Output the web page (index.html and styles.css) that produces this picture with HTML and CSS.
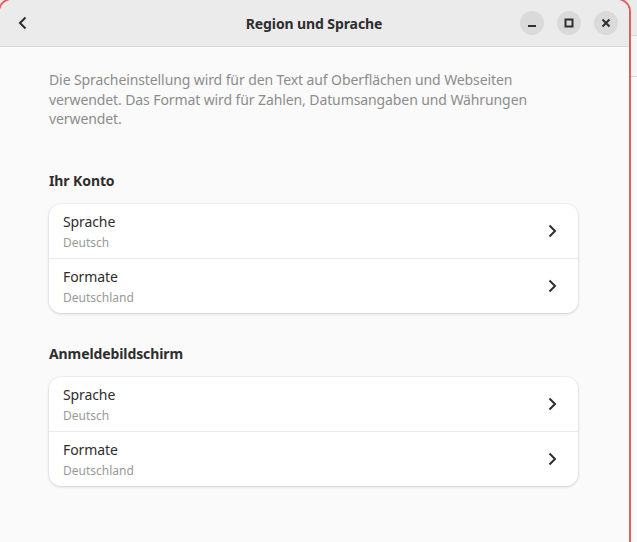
FILE: index.html
```html
<!DOCTYPE html>
<html lang="de">
<head>
    <meta charset="UTF-8">
    <meta name="viewport" content="width=device-width, initial-scale=1.0">
    <title>Region und Sprache</title>
    <link rel="stylesheet" href="styles.css">
</head>
<body>
    <div class="window">
        <div class="headerbar">
            <button class="back-btn" aria-label="Zurück">
                <svg width="16" height="16" viewBox="0 0 16 16"><path d="M10.5 2.5 5 8l5.5 5.5" fill="none" stroke="#2e2e2e" stroke-width="2"/></svg>
            </button>
            <div class="title">Region und Sprache</div>
            <div class="win-controls">
                <span class="win-btn">
                    <svg width="10" height="10" viewBox="0 0 10 10"><rect x="1" y="7" width="8" height="2" fill="#2e2e2e"/></svg>
                </span>
                <span class="win-btn">
                    <svg width="10" height="10" viewBox="0 0 10 10"><rect x="1.5" y="1.5" width="7" height="7" fill="none" stroke="#2e2e2e" stroke-width="2"/></svg>
                </span>
                <span class="win-btn">
                    <svg width="10" height="10" viewBox="0 0 10 10"><path d="M1.5 1.5l7 7M8.5 1.5l-7 7" stroke="#2e2e2e" stroke-width="2"/></svg>
                </span>
            </div>
        </div>

        <div class="content">
            <p class="description">Die Spracheinstellung wird für den Text auf Oberflächen und Webseiten verwendet. Das Format wird für Zahlen, Datumsangaben und Währungen verwendet.</p>

            <h2 class="group-title">Ihr Konto</h2>
            <div class="card">
                <div class="row">
                    <div class="row-text">
                        <div class="row-title">Sprache</div>
                        <div class="row-subtitle">Deutsch</div>
                    </div>
                    <svg class="chevron" width="16" height="16" viewBox="0 0 16 16"><path d="M5.5 2.5 11 8l-5.5 5.5" fill="none" stroke="#2e2e2e" stroke-width="2"/></svg>
                </div>
                <div class="row">
                    <div class="row-text">
                        <div class="row-title">Formate</div>
                        <div class="row-subtitle">Deutschland</div>
                    </div>
                    <svg class="chevron" width="16" height="16" viewBox="0 0 16 16"><path d="M5.5 2.5 11 8l-5.5 5.5" fill="none" stroke="#2e2e2e" stroke-width="2"/></svg>
                </div>
            </div>

            <h2 class="group-title">Anmeldebildschirm</h2>
            <div class="card">
                <div class="row">
                    <div class="row-text">
                        <div class="row-title">Sprache</div>
                        <div class="row-subtitle">Deutsch</div>
                    </div>
                    <svg class="chevron" width="16" height="16" viewBox="0 0 16 16"><path d="M5.5 2.5 11 8l-5.5 5.5" fill="none" stroke="#2e2e2e" stroke-width="2"/></svg>
                </div>
                <div class="row">
                    <div class="row-text">
                        <div class="row-title">Formate</div>
                        <div class="row-subtitle">Deutschland</div>
                    </div>
                    <svg class="chevron" width="16" height="16" viewBox="0 0 16 16"><path d="M5.5 2.5 11 8l-5.5 5.5" fill="none" stroke="#2e2e2e" stroke-width="2"/></svg>
                </div>
            </div>
        </div>
    </div>
</body>
</html>
```

FILE: styles.css
```css
html, body {
    margin: 0;
    height: 100%;
    overflow: hidden;
}
body {
    font-family: "Noto Sans", "Open Sans", sans-serif;
    color: #2e2e2e;
    background: linear-gradient(#ebebeb 35px, #d6d6d6 35px, #d6d6d6 36px, #f6f6f6 36px, #f6f6f6 76px, #d6d6d6 76px, #d6d6d6 77px, #fafafa 77px);
}
.window {
    width: 629px;
    height: 570px;
    margin: -2px 0 0 -2px;
    border: 2px solid #e35d5d;
    border-bottom: none;
    border-radius: 14px 14px 0 0;
    overflow: hidden;
    background: #fafafa;
    box-sizing: content-box;
}
.headerbar {
    height: 46px;
    display: flex;
    align-items: center;
    background: #ebebeb;
    border-bottom: 1px solid #dadada;
    padding: 0 11px 0 11px;
}
.back-btn {
    width: 24px;
    height: 24px;
    display: flex;
    align-items: center;
    justify-content: center;
    padding: 0;
    border: none;
    background: none;
}
.title {
    flex: 1;
    text-align: center;
    font-size: 14px;
    font-weight: bold;
    letter-spacing: -0.1px;
    padding-left: 73px;
}
.win-controls {
    display: flex;
    gap: 13px;
}
.win-btn {
    width: 24px;
    height: 24px;
    border-radius: 50%;
    background: #dadada;
    display: flex;
    align-items: center;
    justify-content: center;
}
.content {
    padding: 23px 51px 0 49px;
}
.description {
    margin: 0;
    font-size: 14px;
    line-height: 19.5px;
    letter-spacing: -0.1px;
    color: #8c8c8c;
}
.group-title {
    margin: 42px 0 13px;
    font-size: 14px;
    line-height: 20px;
    letter-spacing: -0.1px;
    font-weight: bold;
}
.card + .group-title {
    margin-top: 31px;
}
.card {
    background: #fff;
    border-radius: 12px;
    box-shadow: 0 0 0 1px rgba(0, 0, 0, 0.03), 0 1px 3px rgba(0, 0, 0, 0.14);
}
.row {
    height: 54px;
    box-sizing: border-box;
    display: flex;
    align-items: center;
    padding: 0 14px;
}
.row + .row {
    border-top: 1px solid #ececec;
    height: 55px;
}
.row-text {
    flex: 1;
    padding-top: 1px;
}
.row-title {
    font-size: 14px;
    line-height: 20px;
    letter-spacing: -0.1px;
}
.row-subtitle {
    font-size: 12px;
    line-height: 16px;
    margin-top: 3px;
    color: #999;
}
.chevron {
    margin-right: 4px;
}
```
